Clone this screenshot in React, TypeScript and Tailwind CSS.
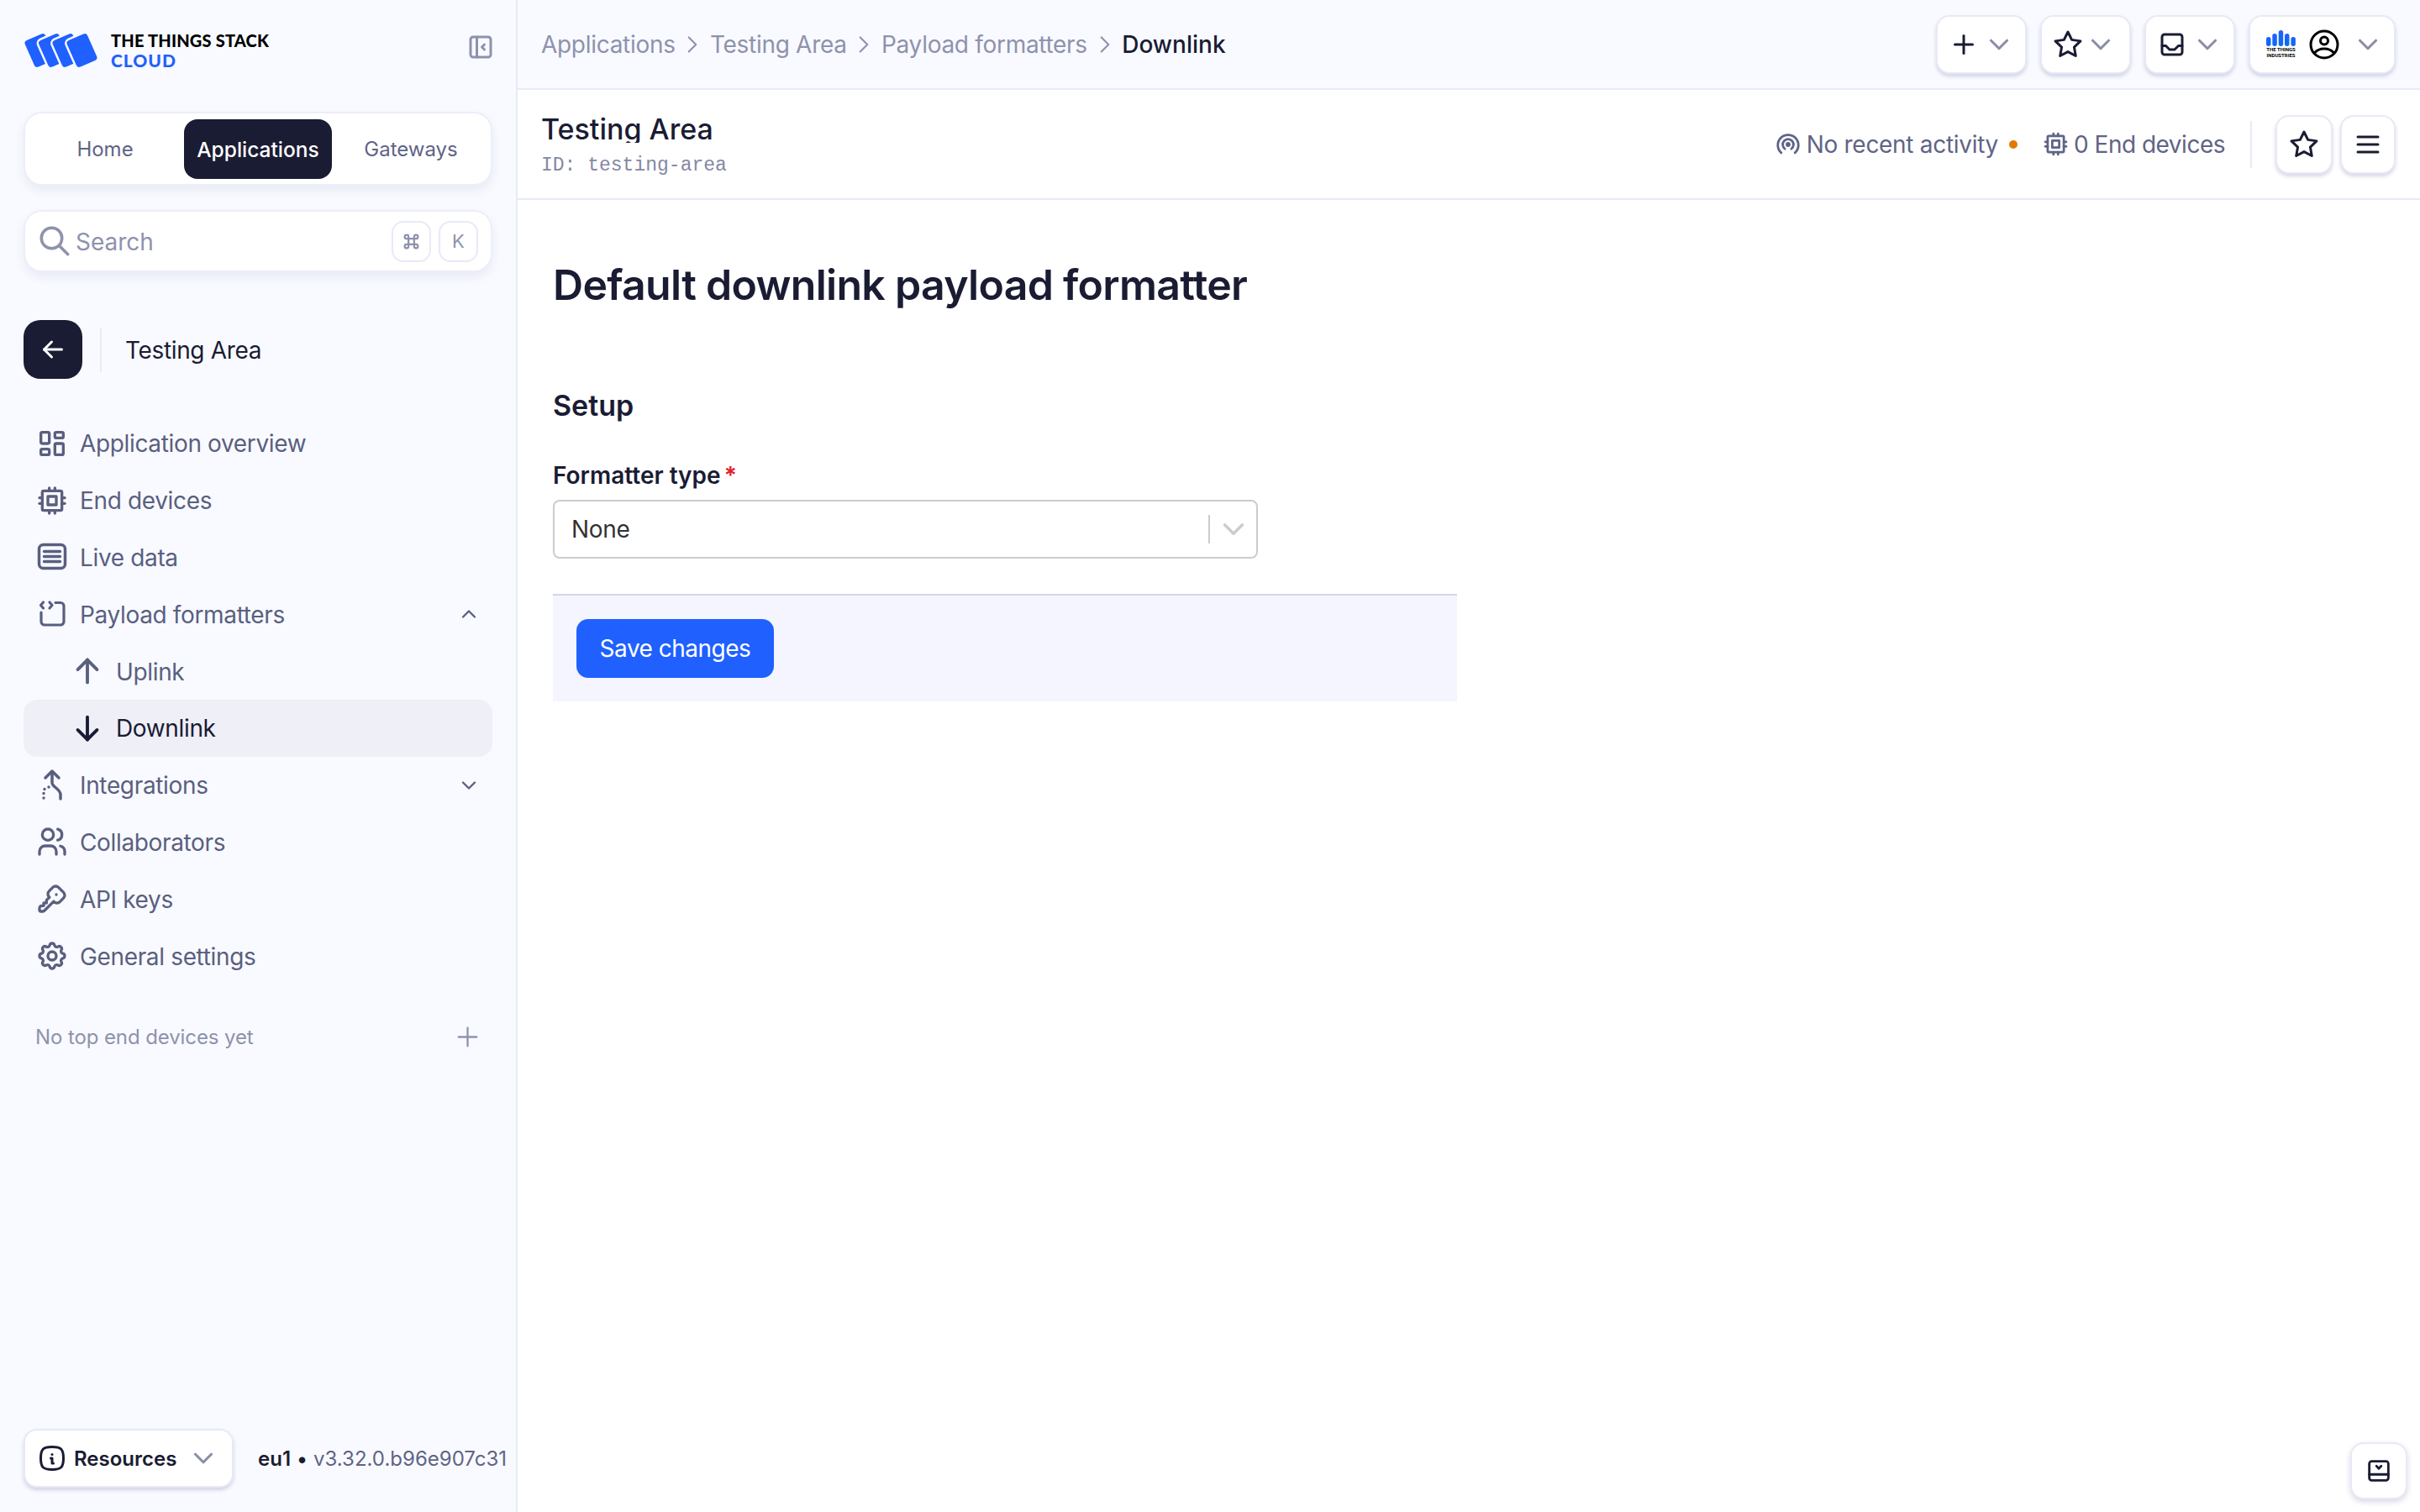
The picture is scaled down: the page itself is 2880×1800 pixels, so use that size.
import React from "react";
import {
  TbArrowDown, TbArrowLeft, TbArrowUp, TbChevronDown, TbChevronRight, TbChevronUp, TbCommand, TbCpu, TbInbox,
  TbInfoSquareRounded, TbKey, TbLayoutBottombarCollapse, TbLayoutDashboard, TbLayoutSidebarLeftCollapse, TbMenu2,
  TbPlus, TbSearch, TbSettings, TbStar, TbUsers,
} from "react-icons/tb";

const Live = (p: { className?: string }) => (
  <svg viewBox="0 0 44 44" fill="none" stroke="currentColor" strokeWidth="3.500" strokeLinecap="round" strokeLinejoin="round" className={p.className}>
    <rect x="6.500" y="7.500" width="31" height="28" rx="5" />
    <path d="M12.500 15.500h19M12.500 21.500h19M12.500 27.500h19" />
  </svg>
);
const Payload = (p: { className?: string }) => (
  <svg viewBox="0 0 44 44" fill="none" stroke="currentColor" strokeWidth="3.200" strokeLinecap="round" strokeLinejoin="round" className={p.className}>
    <path d="M26 8.500h6a4 4 0 0 1 4 4V31a4 4 0 0 1-4 4H13a4 4 0 0 1-4-4V20" />
    <path d="M11.500 8 8.500 11.500l3 3.500M19 8l3 3.500-3 3.500" />
  </svg>
);
const Integrations = (p: { className?: string }) => (
  <svg viewBox="0 0 44 44" fill="none" stroke="currentColor" strokeWidth="3.500" strokeLinecap="round" strokeLinejoin="round" className={p.className}>
    <path d="M14 13l8-8 8 8M22 5v14c0 5 10 7 10 14v5" />
    <path d="M18 24v0M13 26.500v0M12 31.500v0M12 37v0" />
  </svg>
);
const Activity = (p: { className?: string }) => (
  <svg viewBox="0 0 24 24" fill="none" stroke="currentColor" strokeWidth="2.400" strokeLinecap="round" strokeLinejoin="round" className={p.className}>
    <path d="M5 20.500A10.500 10.500 0 1 1 19 20.500" />
    <path d="M8.700 16.500A5.500 5.500 0 1 1 15.300 16.500" />
    <circle cx="12" cy="12" r="1.300" fill="currentColor" />
  </svg>
);
const UserRound = (p: { className?: string }) => (
  <svg viewBox="0 0 36 36" fill="none" stroke="#000" strokeWidth="3" className={p.className}>
    <circle cx="18" cy="18" r="16" />
    <circle cx="18" cy="13.500" r="4.500" />
    <path d="M6.500 28c3-3.500 7-5 11.500-5s8.500 1.500 11.500 5" />
  </svg>
);
const Logo = () => (
  <svg viewBox="0 0 90 44" className="h-[44px] w-[90px] shrink-0 overflow-visible">
    <g fill="#1f60ff" stroke="#f8faff" strokeWidth="2.500">
      <rect x="-14.500" y="-18.500" width="29" height="37" rx="5" transform="translate(19.500 22) rotate(-24)" />
      <rect x="-14.500" y="-18.500" width="29" height="37" rx="5" transform="translate(36 22) rotate(-24)" />
      <rect x="-14.500" y="-18.500" width="29" height="37" rx="5" transform="translate(52.500 22) rotate(-24)" />
      <rect x="-14.500" y="-18.500" width="29" height="37" rx="5" transform="translate(69.500 22) rotate(-24)" />
    </g>
  </svg>
);
const Bars = () => (
  <svg viewBox="0 0 35 19" className="h-[19px] w-[35px]">
    <defs>
      <linearGradient id="b" x1="0" y1="0" x2="0" y2="1">
        <stop offset="0" stopColor="#1f60ff" />
        <stop offset="1" stopColor="#0a6cf0" />
      </linearGradient>
    </defs>
    <g fill="url(#b)">
      <rect x="0" y="8" width="5.500" height="11" rx="2.700" />
      <rect x="7.300" y="4" width="5.500" height="15" rx="2.700" />
      <rect x="14.700" y="0" width="5.500" height="19" rx="2.700" />
      <rect x="22" y="4" width="5.500" height="15" rx="2.700" />
      <rect x="29.400" y="8" width="5.500" height="11" rx="2.700" />
    </g>
  </svg>
);

const navIcon = "h-[44px] w-[44px] shrink-0";
const tbIcon = "mx-[2px] h-[40px] w-[40px] shrink-0";
const NavRow = ({ icon, label, chevron }: { icon: React.ReactNode; label: string; chevron?: React.ReactNode }) => (
  <div className="flex h-[67.8px] items-center pr-[14px] pl-[12px] text-[#5a5f80]">
    {icon}
    <span className="ml-[11px] pt-[1px] text-[28px] tracking-[-0.35px]">{label}</span>
    {chevron && <span className="ml-auto text-[#5a5f80]">{chevron}</span>}
  </div>
);
const SubRow = ({ icon, label, active }: { icon: React.ReactNode; label: string; active?: boolean }) => (
  <div className={`flex h-[67.8px] items-center rounded-[16px] pl-[53px] text-[28px] tracking-[-0.35px] ${active ? "bg-[#efeff8] text-[#1a1c33]" : "text-[#5a5f80]"}`}>
    {icon}
    <span className="ml-[11px] pt-[1px]">{label}</span>
  </div>
);
const TopBtn = ({ children, w }: { children: React.ReactNode; w: string }) => (
  <div className={`flex h-[70px] items-center rounded-[16px] border-2 border-[#e8e9f6] bg-white text-[#1a1c33] shadow-[0_3px_4px_rgba(60,60,130,0.2)] ${w}`}>{children}</div>
);
const Chev = () => <TbChevronDown className="h-[38px] w-[38px] shrink-0 text-[#8a8ea9]" />;
const Crumb = () => <TbChevronRight strokeWidth={1.500} className="mx-[3.700px] h-[34px] w-[34px] shrink-0" />;

export default function App() {
  return (
    <div className="relative flex h-[1800px] w-[2880px] overflow-hidden bg-white font-['Inter',sans-serif] text-[#1a1c33]">
      <aside className="flex h-full w-[616px] shrink-0 flex-col border-r-2 border-[#e8eaf6] bg-[#f8faff] px-[28px] pt-[38px] pb-[29px]">
        <div className="flex h-[44px] items-center">
          <Logo />
          <div className="ml-[14px] flex flex-col">
            <span className="whitespace-nowrap font-['Lato',sans-serif] text-[20px] leading-[24px] font-black tracking-[0.2px] text-black">THE THINGS STACK</span>
            <span className="font-['Lato',sans-serif] text-[21px] leading-[24px] font-black tracking-[1px] text-[#1f60ff]">CLOUD</span>
          </div>
          <TbLayoutSidebarLeftCollapse className="mr-[-3.500px] mb-[9px] ml-auto h-[36px] w-[36px] text-[#8e92ad]" />
        </div>

        <div className="mt-[51px] grid h-[88px] grid-cols-3 items-center gap-[6px] rounded-[22px] border-2 border-[#eceef8] bg-white px-[7px] text-[24px] text-[#5f6486] shadow-[0_6px_12px_rgba(60,60,130,0.08)]">
          <div className="pt-[2px] text-center">Home</div>
          <div className="flex h-[71px] items-center justify-center rounded-[16px] bg-[#1a1c33] pt-[2px] text-[24.500px] font-medium text-white">Applications</div>
          <div className="pt-[2px] text-center">Gateways</div>
        </div>

        <div className="mt-[29px] flex h-[74px] items-center rounded-[22px] border-2 border-[#eceef8] bg-white pr-[15px] pl-[14px] shadow-[0_6px_12px_rgba(60,60,130,0.08)]">
          <TbSearch className="h-[42px] w-[42px] shrink-0 text-[#8e92ad]" />
          <span className="ml-[4px] pt-[2px] text-[28px] text-[#8e92ad]">Search</span>
          <div className="ml-auto flex h-[49px] w-[47px] items-center justify-center rounded-[14px] border-2 border-[#e8eaf6] text-[#8e92ad]"><TbCommand className="h-[27px] w-[27px]" /></div>
          <div className="ml-[9px] flex h-[49px] w-[47px] items-center justify-center rounded-[14px] border-2 border-[#e8eaf6] text-[22px] text-[#8e92ad]">K</div>
        </div>

        <div className="mt-[57px] flex h-[70px] items-center">
          <div className="flex h-[70px] w-[70px] items-center justify-center rounded-[20px] bg-[#1a1c33]"><TbArrowLeft className="h-[36px] w-[36px] text-white" /></div>
          <div className="ml-[21px] h-[53px] w-[2px] bg-[#e8eaf6]" />
          <span className="ml-[28px] pt-[2px] text-[28px] tracking-[-0.35px] text-[#1a1c33]">Testing Area</span>
        </div>

        <nav className="mt-[43px] flex flex-col">
          <NavRow icon={<TbLayoutDashboard className={tbIcon} />} label="Application overview" />
          <NavRow icon={<TbCpu className={tbIcon} />} label="End devices" />
          <NavRow icon={<Live className={navIcon} />} label="Live data" />
          <NavRow icon={<Payload className={navIcon} />} label="Payload formatters" chevron={<TbChevronUp className="h-[28px] w-[28px]" />} />
          <SubRow icon={<TbArrowUp className="h-[46px] w-[46px] shrink-0" />} label="Uplink" />
          <SubRow active icon={<TbArrowDown className="h-[46px] w-[46px] shrink-0" />} label="Downlink" />
          <NavRow icon={<Integrations className={navIcon} />} label="Integrations" chevron={<TbChevronDown className="h-[28px] w-[28px]" />} />
          <NavRow icon={<TbUsers className={tbIcon} />} label="Collaborators" />
          <NavRow icon={<TbKey className={tbIcon} />} label="API keys" />
          <NavRow icon={<TbSettings className={tbIcon} />} label="General settings" />
        </nav>

        <div className="mt-[39px] flex h-[48px] items-center pr-[11.500px] pl-[14px] text-[24px] tracking-[-0.1px] text-[#8e92ad]">
          <span>No top end devices yet</span>
          <TbPlus strokeWidth={1.500} className="ml-auto h-[37px] w-[37px]" />
        </div>

        <div className="mt-auto flex items-center">
          <div className="flex h-[70px] w-[250px] shrink-0 items-center rounded-[16px] border-2 border-[#e8e9f6] bg-white pl-[14px] shadow-[0_3px_4px_rgba(60,60,130,0.2)]">
            <TbInfoSquareRounded className="h-[36px] w-[36px] shrink-0" />
            <span className="ml-[8px] pt-[2px] text-[24px] font-semibold">Resources</span>
            <TbChevronDown className="ml-[13px] h-[38px] w-[38px] shrink-0 text-[#8a8ea9]" />
          </div>
          <div className="ml-[29px] whitespace-nowrap pt-[2px] text-[24px]">
            <span className="font-semibold">eu1</span>
            <span className="text-[#1a1c33]"> • </span>
            <span className="text-[#5f6486]">v3.32.0.b96e907c31</span>
          </div>
        </div>
      </aside>

      <main className="flex min-w-0 flex-1 flex-col">
        <div className="flex h-[107px] shrink-0 items-center border-b-2 border-[#e8eaf6] bg-[#f8faff] pr-[29px] pl-[28px] text-[28px] tracking-[-0.3px] text-[#8e92ad]">
          <span>Applications</span>
          <Crumb />
          <span>Testing Area</span>
          <Crumb />
          <span>Payload formatters</span>
          <Crumb />
          <span className="font-medium tracking-normal text-[#1a1c33]">Downlink</span>
          <div className="ml-auto flex gap-[16px]">
            <TopBtn w="w-[108px] pl-[13px]"><TbPlus className="h-[36px] w-[36px] shrink-0" /><span className="ml-[5px]"><Chev /></span></TopBtn>
            <TopBtn w="w-[108px] pl-[13px]"><TbStar className="h-[36px] w-[36px] shrink-0" /><span className="ml-[2px]"><Chev /></span></TopBtn>
            <TopBtn w="w-[108px] pl-[12.500px]"><TbInbox className="h-[36px] w-[36px] shrink-0" /><span className="ml-[5px]"><Chev /></span></TopBtn>
            <TopBtn w="w-[175px] pl-[19px]">
              <div className="flex w-[35px] flex-col items-center">
                <Bars />
                <span className="mt-[1px] font-['Roboto',sans-serif] text-[6px] leading-[6.500px] font-bold tracking-normal whitespace-nowrap text-black">THE THINGS</span>
                <span className="font-['Roboto',sans-serif] text-[6px] leading-[6.500px] font-bold tracking-normal whitespace-nowrap text-black">INDUSTRIES</span>
              </div>
              <UserRound className="ml-[16px] h-[36px] w-[36px]" />
              <span className="ml-[15px]"><Chev /></span>
            </TopBtn>
          </div>
        </div>

        <div className="flex h-[131px] shrink-0 items-center border-b-2 border-[#e8eaf6] bg-white pr-[29px] pl-[28px]">
          <div className="mb-[2px] flex flex-col">
            <span className="h-[38px] overflow-hidden text-[34px] leading-[44px] font-medium">Testing Area</span>
            <span className="mt-[15px] h-[24px] overflow-hidden font-['Liberation_Mono',monospace] text-[23px] leading-[24px] text-[#8388a5]">ID: testing-area</span>
          </div>
          <div className="ml-auto flex items-center text-[28px] text-[#5f6486]">
            <Activity className="h-[28px] w-[28px]" />
            <span className="ml-[8px] tracking-[-0.3px]">No recent activity</span>
            <span className="ml-[13px] h-[10px] w-[10px] rounded-full bg-[#e07b00]" />
            <TbCpu className="ml-[29px] h-[33px] w-[33px]" />
            <span className="ml-[5px] tracking-[-0.5px]">0 End devices</span>
            <span className="ml-[30px] h-[56px] w-[2px] bg-[#e8eaf6]" />
            <div className="ml-[28px] flex gap-[9px]">
              <TopBtn w="w-[68px] justify-center"><TbStar className="h-[36px] w-[36px] shrink-0" /></TopBtn>
              <TopBtn w="w-[66px] justify-center"><TbMenu2 className="h-[36px] w-[36px] shrink-0" /></TopBtn>
            </div>
          </div>
        </div>

        <div className="flex flex-col pt-[71px] pl-[42px]">
          <h1 className="text-[50px] leading-[60px] font-semibold tracking-[-0.7px]">Default downlink payload formatter</h1>
          <h2 className="mt-[92px] text-[34px] leading-[44px] font-semibold">Setup</h2>
          <div className="mt-[43px] text-[28px] leading-[36px] font-semibold">Formatter type<span className="ml-[4px] text-[#e0202a]">*</span></div>
          <div className="mt-[11px] flex h-[70px] w-[839px] items-center rounded-[8px] border-2 border-[#cccccc] bg-white pl-[20px] text-[28px] tracking-[-0.35px] text-[#333333]">
            <span>None</span>
            <span className="ml-auto h-[34px] w-[2px] bg-[#cccccc]" />
            <TbChevronDown className="mr-[6px] ml-[7px] h-[42px] w-[42px] text-[#cccccc]" />
          </div>
          <div className="mt-[42px] flex h-[128px] w-[1076px] items-center border-t-2 border-[#d3d5e8] bg-[#f4f5fe] pl-[28px]">
            <button className="flex h-[70px] w-[235px] items-center justify-center rounded-[14px] bg-[#1f60ff] text-[28px] tracking-[-0.5px] text-white">Save changes</button>
          </div>
        </div>
      </main>

      <div className="absolute right-[15px] bottom-[15px] flex h-[68px] w-[68px] items-center justify-center rounded-[16px] border-2 border-[#e8e9f6] bg-white shadow-[0_3px_6px_rgba(60,60,130,0.2)]">
        <TbLayoutBottombarCollapse className="h-[34px] w-[34px]" />
      </div>
    </div>
  );
}
